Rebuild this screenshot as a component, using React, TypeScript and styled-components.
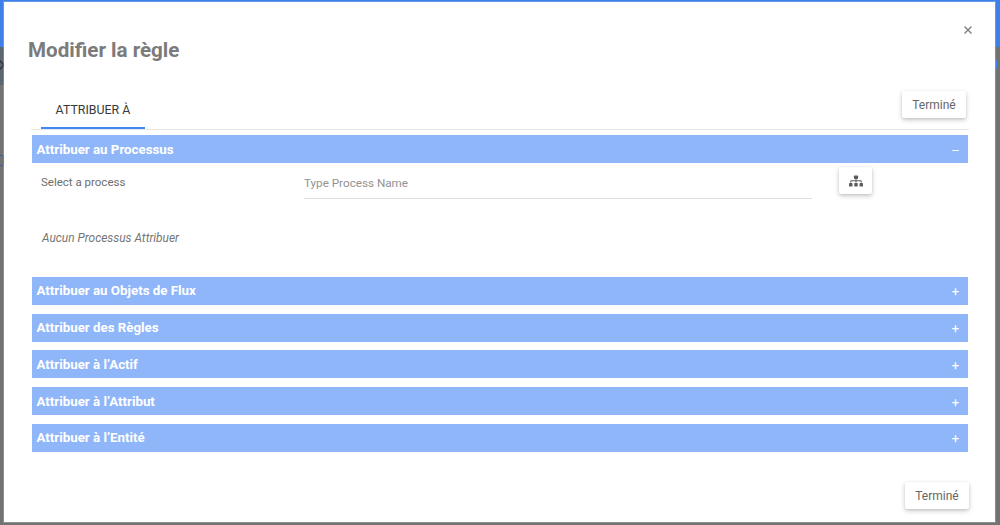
import React from 'react'
import styled, { createGlobalStyle } from 'styled-components'
import { FaSitemap } from 'react-icons/fa'

const GlobalStyle = createGlobalStyle`
  html, body {
    margin: 0;
    padding: 0;
    height: 525px;
    overflow: hidden;
    font-family: Roboto, "Liberation Sans", sans-serif;
    background: #6f6f6f;
  }
`

const Page = styled.div`
  width: 1000px;
  height: 525px;
  background: #727272;
  position: relative;
  overflow: hidden;
`

const TopBar = styled.div`
  height: 47px;
  background: #3f7fe8;
`

const SubBar = styled.div`
  height: 38px;
  width: 4px;
  background: #5c6572;
`

const BackdropChevron = styled.svg`
  position: absolute;
  left: 0;
  top: 59px;
`

const BackdropBox = styled.div`
  position: absolute;
  left: -6px;
  top: 155px;
  width: 8px;
  height: 9px;
  border: 1px solid #3d5f9c;
  border-radius: 2px;
`

const BackdropPill = styled.div`
  position: absolute;
  left: 995px;
  top: 60px;
  width: 3px;
  height: 9px;
  border-radius: 0 3px 3px 0;
  background: #3f7fe8;
`

const Modal = styled.div`
  position: absolute;
  left: 4px;
  top: 2px;
  width: 991px;
  height: 520px;
  background: #fff;
  box-sizing: border-box;
  box-shadow: 0 0 0 1px rgba(255, 255, 255, 0.2);
  padding: 0 27px 0 24px;
  display: flex;
  flex-direction: column;
`

const CloseButton = styled.button`
  position: absolute;
  top: 21px;
  right: 20px;
  border: 0;
  padding: 0;
  background: none;
  width: 14px;
  height: 14px;
  color: #858585;
  display: flex;
`

const Title = styled.h2`
  margin: 36px 0 0;
  font-size: 20.6px;
  line-height: 25px;
  font-weight: 700;
  color: #7b7b7b;
`

const TabRow = styled.div`
  margin: 25px -1px 0 3px;
  height: 41px;
  border-bottom: 1px solid #e6e6e6;
  display: flex;
  justify-content: space-between;
`

const Tab = styled.div`
  width: 104px;
  height: 41px;
  margin-left: 10px;
  box-sizing: border-box;
  border-bottom: 2px solid #4285f4;
  font-size: 12.4px;
  line-height: 44px;
  text-align: center;
  color: #3a3a3a;
`

const DoneButton = styled.button`
  width: 64px;
  height: 27px;
  border: 0;
  border-radius: 2px;
  background: #fff;
  box-shadow: 0 2px 5px rgba(0, 0, 0, 0.2), 0 1px 3px rgba(0, 0, 0, 0.08);
  font-family: inherit;
  font-size: 12px;
  color: #666;
  padding: 0;
`

const TabDone = styled(DoneButton)`
  margin: 3px 3px 0 0;
`

const Sections = styled.div`
  margin: 5px 0 0 4px;
  width: 936px;
  display: flex;
  flex-direction: column;
  gap: 8.7px;
`

const Header = styled.div`
  height: 28px;
  background: #8fb6f9;
  color: #fff;
  font-size: 13.3px;
  font-weight: 700;
  padding: 0 8px 0 4.5px;
  display: flex;
  align-items: center;
  justify-content: space-between;
`

const Sign = styled.span`
  font-weight: 400;
  font-size: 13px;
  width: 9px;
  text-align: center;
  margin-top: 2px;
`

const Body = styled.div`
  height: 105.3px;
  font-size: 11.5px;
  color: #6e6e6e;
`

const ProcessRow = styled.div`
  display: flex;
  align-items: flex-start;
  padding: 4px 0 0 9px;
`

const Label = styled.div`
  width: 263px;
  line-height: 22px;
  padding-top: 4px;
`

const FakeInput = styled.div`
  width: 508px;
  height: 32px;
  box-sizing: border-box;
  border-bottom: 1px solid #e0e0e0;
  color: #929292;
  font-size: 11.7px;
  line-height: 32px;
`

const IconButton = styled.button`
  width: 33px;
  height: 27px;
  margin-left: 27px;
  border: 0;
  border-radius: 2px;
  background: #fff;
  color: #5c5c5c;
  box-shadow: 0 2px 5px rgba(0, 0, 0, 0.2), 0 1px 3px rgba(0, 0, 0, 0.08);
  display: flex;
  align-items: center;
  justify-content: center;
  padding: 0;
`

const EmptyNote = styled.div`
  margin: 31px 0 0 10px;
  font-size: 11.9px;
  font-style: italic;
  line-height: 16px;
  color: #757575;
`

const Footer = styled.div`
  margin: auto -1px 0 0;
  padding-bottom: 13px;
  display: flex;
  justify-content: flex-end;
`

const closedSections = [
  'Attribuer au Objets de Flux',
  'Attribuer des Règles',
  'Attribuer à l’Actif',
  'Attribuer à l’Attribut',
  'Attribuer à l’Entité',
]

const App: React.FC = () => {
  return (
    <Page>
      <GlobalStyle />
      <TopBar />
      <SubBar />
      <BackdropChevron width="4" height="12" viewBox="0 0 4 12">
        <path d="M-1 1l5 5-5 5" fill="none" stroke="#2f3338" strokeWidth="1.3" />
      </BackdropChevron>
      <BackdropBox />
      <BackdropPill />
      <Modal>
        <CloseButton aria-label="Fermer">
          <svg width="14" height="14" viewBox="0 0 14 14">
            <path d="M3.5 3.5l7 7M10.5 3.5l-7 7" stroke="currentColor" strokeWidth="1.5" />
          </svg>
        </CloseButton>
        <Title>Modifier la règle</Title>
        <TabRow>
          <Tab>ATTRIBUER À</Tab>
          <TabDone>Terminé</TabDone>
        </TabRow>
        <Sections>
          <div>
            <Header>
              Attribuer au Processus
              <Sign>–</Sign>
            </Header>
            <Body>
              <ProcessRow>
                <Label>Select a process</Label>
                <FakeInput>Type Process Name</FakeInput>
                <IconButton aria-label="Process">
                  <FaSitemap size={14} />
                </IconButton>
              </ProcessRow>
              <EmptyNote>Aucun Processus Attribuer</EmptyNote>
            </Body>
          </div>
          {closedSections.map((name) => (
            <Header key={name}>
              {name}
              <Sign>+</Sign>
            </Header>
          ))}
        </Sections>
        <Footer>
          <DoneButton>Terminé</DoneButton>
        </Footer>
      </Modal>
    </Page>
  )
}

export default App
